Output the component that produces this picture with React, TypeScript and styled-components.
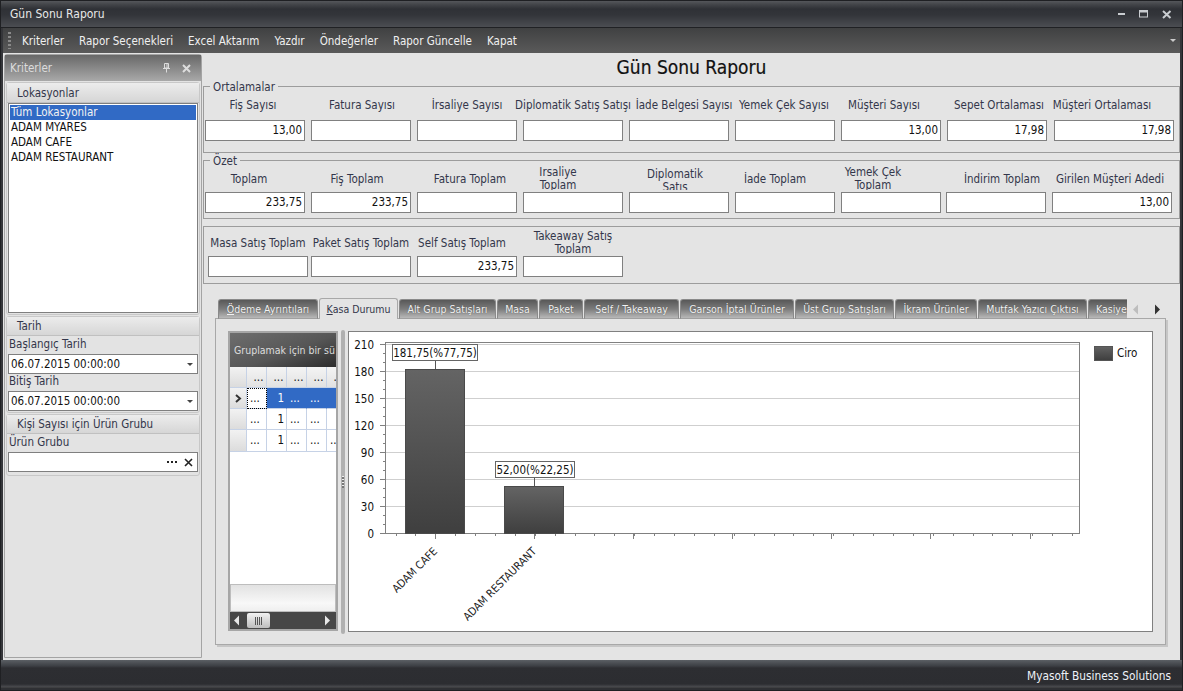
import React from "react";
import styled, { createGlobalStyle } from "styled-components";

const FONT = `"DejaVu Sans Condensed", "Liberation Sans", Arial, sans-serif`;

const Global = createGlobalStyle`
  html, body { margin: 0; padding: 0; background: #2f3034; }
  * { box-sizing: border-box; }
  body { font-family: ${FONT}; font-size: 11.5px; color: #33364a; }
`;

const Window = styled.div`
  width: 1183px; height: 691px; display: flex; flex-direction: column; overflow: hidden;
  background: #35363a; border: 1px solid #1f2023;
`;
const TitleBar = styled.div`
  height: 27px; flex: none; display: flex; align-items: center; justify-content: space-between;
  padding: 0 9px 0 9px; color: #e8e8e8; font-size: 12px;
  background: linear-gradient(#55575b 0, #45474b 3px, #2f3136 8px, #33353a 14px, #4b4d52 26px);
  border-bottom: 1px solid #202124;
`;
const WinButtons = styled.div`display: flex; align-items: center; gap: 13px; padding-right: 1px;`;
const MenuBar = styled.div`
  height: 25px; flex: none; display: flex; align-items: center; margin: 0 2px; padding: 0 5px;
  background: linear-gradient(#404142, #5a5a5a);
  color: #f0f0f0;
`;
const Grip = styled.div`width: 3px; height: 17px; margin-right: 11px;
  background: repeating-linear-gradient(#8a8a8a 0 2px, transparent 2px 4px);`;
const MenuItem = styled.span`margin-right: 15px; white-space: nowrap;`;
const MenuArrow = styled.span`margin-left: auto; margin-right: -1px; width: 0; height: 0;
  border-left: 3px solid transparent; border-right: 3px solid transparent; border-top: 3px solid #ccc;`;
const Body = styled.div`
  flex: 1; min-height: 0; display: flex; margin: 0 2px; background: #e4e4e4;
`;
const Side = styled.aside`
  width: 198px; flex: none; margin: 1px 0 2px 1px; border: 1px solid #a4a4a4; border-radius: 3px 3px 0 0;
  background: #e3e3e3; display: flex; flex-direction: column;
`;
const SideHead = styled.div`
  height: 26px; flex: none; display: flex; align-items: center; padding: 0 10px 0 5px; color: #dcdcdc;
  background: linear-gradient(#686868, #a9a9a9);
  justify-content: space-between;
`;
const SideIcons = styled.div`display: flex; align-items: center; gap: 11px;`;
const Section = styled.section`
  margin: 1px 1px 0 1px; border: 1px solid #c8c8c8; border-radius: 3px; display: flex; flex-direction: column;
  padding-bottom: ${p => p.$pb ?? 3}px;
`;
const SectionHead = styled.div`
  height: ${p => p.$h ?? 20}px; flex: none; padding-left: 10px; display: flex; align-items: center; color: #33364a;
  background: linear-gradient(#ececec, #d6d6d6); border-bottom: 1px solid #c0c0c0;
  margin-bottom: ${p => p.$mb ?? 0}px;
`;
const ListBox = styled.div`
  margin: 0 1px; height: 210px; background: #fff; border: 1px solid #7f7f7f; padding-top: 1px; color: #111;
`;
const ListRow = styled.div`
  height: 15px; line-height: 15px; padding-left: 1px;
  margin: 0 1px;
  background: ${p => (p.$selected ? "#316ac5" : "transparent")};
  color: ${p => (p.$selected ? "#f2f2f2" : "#111")};
`;
const SideLabel = styled.div`height: 16px; line-height: 15px; padding-left: 2px; color: #33364a;`;
const Combo = styled.div`
  margin: 1px 1px 0; height: 20px; background: #fff; border: 1px solid #7f7f7f; display: flex; align-items: center;
  padding: 0 4px 0 2px; color: #111; justify-content: space-between;
`;
const DownTri = styled.span`width: 0; height: 0; border-left: 3px solid transparent; border-right: 3px solid transparent; border-top: 3px solid #444;`;
const ComboTools = styled.span`display: flex; align-items: center; gap: 7px; font-weight: bold; color: #222;`;

const Main = styled.main`
  flex: 1; min-width: 0; padding-left: 1px; display: flex; flex-direction: column;
`;
const ReportTitle = styled.h1`
  margin: 0; height: 33px; flex: none; text-align: center; font-size: 19px; line-height: 28px; color: #111;
  font-weight: normal; -webkit-text-stroke: 0.2px #111;
`;
const Fieldset = styled.div`
  border: 1px solid #9c9c9c; height: ${p => p.$h}px; flex: none; margin-top: ${p => p.$mt ?? 0}px;
  padding: ${p => p.$pt}px 0 0 ${p => p.$pl}px; position: relative;
  display: grid; grid-template-columns: ${p => p.$cols}; grid-template-rows: 26px 21px; row-gap: ${p => p.$rg ?? 0}px;
  justify-content: start;
`;
const Legend = styled.span`
  position: absolute; left: 6px; top: -6px; background: #e4e4e4; padding: 0 3px; line-height: 13px; color: #33364a;
`;
const Label = styled.div`
  width: ${p => p.$w}px;
  display: flex; align-items: center; justify-content: center; white-space: pre; text-align: center;
  line-height: 13px; color: #33364a; clip-path: inset(0 -60px 2px -60px);
  padding-left: ${p => Math.max(0, p.$dx ?? 0) * 2}px; padding-right: ${p => Math.max(0, -(p.$dx ?? 0)) * 2}px;
  padding-top: ${p => p.$pt ?? 0}px;
`;
const Input = styled.div`
  width: ${p => p.$w}px;
  background: #fff; border: 1px solid #808080; text-align: right; padding-right: 2px; line-height: 19px; color: #111;
  grid-row: 2;
`;

const Tabs = styled.div`display: flex; flex-direction: column; margin: 14px 0 0 12px; width: 951px;`;
const TabStrip = styled.div`height: 21px; flex: none; display: flex; align-items: flex-end; padding-left: 3px; position: relative; z-index: 1;`;
const TabClip = styled.div`display: flex; width: 909px; overflow: hidden; align-items: flex-end; gap: 1px;`;
const Tab = styled.div`
  flex: none; width: ${p => p.$w}px; height: ${p => (p.$active ? 21 : 20)}px; display: flex; align-items: center; justify-content: ${p => (p.$clipped ? "flex-start" : "center")};
  padding-left: ${p => (p.$clipped ? 7 : 0)}px; font-size: 10.5px;
  border: 1px solid ${p => (p.$active ? "#a8a8a8" : "#8a8a8a")}; border-bottom: ${p => (p.$active ? "none" : "1px solid #a0a0a0")};
  border-radius: 3px 3px 0 0; white-space: pre; overflow: hidden;
  background: ${p => (p.$active ? "#e4e4e4" : "linear-gradient(#585858, #7c7c7c 50%, #b8b8b8)")};
  color: ${p => (p.$active ? "#33364a" : "#f2f2f2")};
  text-shadow: ${p => (p.$active ? "none" : "0 0 1px #444")};
  u { text-decoration: underline; }
`;
const TabNav = styled.div`display: flex; align-items: center; gap: 15px; margin-left: 5px; height: 20px;`;
const TabPage = styled.div`
  height: 327px; flex: none; margin-top: -1px; border: 1px solid #a8a8a8; box-shadow: 2px 2px 0 #c6c6c6;
  background: #e4e4e4; display: flex; padding: 12px 12px 13px 12px;
`;
const GridBox = styled.div`
  width: 110px; height: 300px; flex: none; border: 2px solid #a6a6a6; background: #fff; display: flex; flex-direction: column;
  overflow: hidden;
`;
const GroupPanel = styled.div`
  height: 34px; flex: none; padding-left: 4px; display: flex; align-items: center; color: #dcdcdc; white-space: nowrap; overflow: hidden; font-size: 10.5px;
  background: linear-gradient(160deg, #6e6e6e 0%, #565656 55%, #2c2c2c 100%);
`;
const GridRow = styled.div`
  display: grid; grid-template-columns: 17px 20px 20px 20px 20px 20px; flex: none; height: ${p => p.$h}px;
  overflow: hidden;
`;
const RowHead = styled.div`
  background: linear-gradient(#f2f2f2, #dcdcdc); border-right: 1px solid #c6d2e6; border-bottom: 1px solid #c6d2e6;
  display: flex; align-items: center; justify-content: center;
`;
const Cell = styled.div`
  border-right: 1px solid ${p => (p.$on ? "#316ac5" : "#c6d2e6")}; border-bottom: 1px solid #c6d2e6;
  background: ${p => (p.$on ? "#316ac5" : "#fff")};
  color: ${p => (p.$on ? "#fff" : "#111")};
  text-align: ${p => (p.$right ? "right" : "left")}; padding: 0 2px 0 3px; line-height: 21px; overflow: hidden; white-space: nowrap;
  outline: ${p => (p.$focus ? "1px dotted #000" : "none")}; outline-offset: -1px;
`;
const HeadCell = styled(Cell)`
  background: linear-gradient(#f4f4f4, #e2e2e2); text-align: center; padding: 0 0 0 4px;
`;
const GridBlank = styled.div`flex: 1; background: #fff;`;
const GridFooter = styled.div`
  height: 28px; flex: none; background: linear-gradient(#e2e2e2, #f8f8f8 70%, #efefef); border: 1px solid #bdbdbd;
`;
const HScroll = styled.div`
  height: 17px; flex: none; background: #474747; display: flex; align-items: center; justify-content: space-between; padding: 0 5px 0 3px; position: relative;
`;
const Thumb = styled.div`
  position: absolute; left: 17px; top: 1px; width: 23px; height: 15px; border-radius: 2px;
  background: linear-gradient(#f2f2f2, #bdbdbd); display: flex; align-items: center; justify-content: center;
`;
const Splitter = styled.div`
  width: 4px; height: 304px; margin: -1px 3px 0 3px; flex: none; background: #b0b0b0; border-radius: 2px; display: flex; align-items: center; justify-content: center;
`;
const SplitDots = styled.div`
  width: 2px; height: 12px; background: repeating-linear-gradient(#eee 0 1px, #777 1px 3px);
`;
const ChartBox = styled.div`
  width: 805px; height: 301px; flex: none; border: 1px solid #808080; background: #fff;
  svg { display: block; }
  text { font-family: ${FONT}; font-size: 11.5px; fill: #111; }
  text.axis { font-size: 11px; fill: #222; }
`;
const StatusBar = styled.div`
  height: 28px; flex: none; margin: 0; display: flex; justify-content: flex-end; align-items: center; padding: 3px 11px 0 0; color: #eef2f8; font-size: 11.8px;
  background: linear-gradient(#5b5f64 0, #3c3f44 6px, #2d2e32 8px, #2c2d31 24px, #4b4c50 27px, #333 28px);
`;
const Shim = styled.div`height: 2px; flex: none; background: #2f3034;`;

type F = [string, number, string, number?];
const ort: F[] = [
  ["Fiş Sayısı", -2, "13,00"], ["Fatura Sayısı", 1, ""], ["İrsaliye Sayısı", 0, ""], ["Diplomatik Satış Satışı", 0, ""],
  ["İade Belgesi Sayısı", 5, ""], ["Yemek Çek Sayısı", -1, ""], ["Müşteri Sayısı", -7, "13,00"], ["Sepet Ortalaması", 2, "17,98"], ["Müşteri Ortalaması", -12, "17,98"],
];
const oz: F[] = [
  ["Toplam", -6, "233,75"], ["Fiş Toplam", -4, "233,75"], ["Fatura Toplam", 3, ""], ["Irsaliye\nToplam", -15, ""], ["Diplomatik\nSatış", -4, "", 4],
  ["İade Toplam", -10, ""], ["Yemek Çek\nToplam", -18, ""], ["İndirim Toplam", 6, ""], ["Girilen Müşteri Adedi", -2, "13,00"],
];
const sat: F[] = [["Masa Satış Toplam", 0, ""], ["Paket Satış Toplam", 0, ""], ["Self Satış Toplam", -5, "233,75"], ["Takeaway Satış\nToplam", 0, ""]];

const tabs: [React.ReactNode, number][] = [
  [<><u>Ö</u>deme Ayrıntıları</>, 100], [<><u>K</u>asa Durumu</>, 79], ["Alt Grup Satışları", 97], ["Masa", 41], ["Paket", 44],
  ["Self / Takeaway", 95], ["Garson İptal Ürünler", 114], ["Üst Grup Satışları", 99], ["İkram Ürünler", 82], ["Mutfak Yazıcı Çıktısı", 109], ["Kasiyer", 60],
];

const Tri = ({ dir, color }: { dir: "l" | "r"; color: string }) => (
  <svg width="7" height="11" viewBox="0 0 7 11"><path d={dir === "l" ? "M6 0.5V10.5L1 5.5Z" : "M1 0.5V10.5L6 5.5Z"} fill={color} /></svg>
);

const FieldRow = ({ fields }: { fields: F[] }) => (
  <>
    {fields.map(([t, dx, , pt], i) => <Label key={t} $dx={dx} $pt={pt} $w={i === 8 ? 120 : 100}>{t}</Label>)}
    {fields.map(([t, , v], i) => <Input key={t} $w={i === 8 ? 120 : 100}>{v}</Input>)}
  </>
);

const yTicks = [0, 30, 60, 90, 120, 150, 180, 210];
const majorX = [435, 534, 633, 732, 831, 930, 1030];

const Chart = () => {
  const y = (v: number) => 533 - (v / 30) * 27;
  const minors: number[] = [];
  for (let v = 10; v < 210; v += 10) if (v % 30) minors.push(y(v));
  const xMinor: number[] = [];
  for (let x = 395.5; x < 1080; x += 19.9) xMinor.push(Math.round(x));
  return (
    <svg width="803" height="299" viewBox="349 332 803 299" shapeRendering="crispEdges">
      <defs>
        <linearGradient id="bar" x1="0" y1="0" x2="0" y2="1">
          <stop offset="0" stopColor="#646464" /><stop offset="1" stopColor="#3f3f3f" />
        </linearGradient>
      </defs>
      <rect x="385.5" y="342.5" width="694" height="190.5" fill="#fff" stroke="#808080" />
      {yTicks.slice(1).map(v => <line key={v} x1="386" x2="1079" y1={y(v) + 0.5} y2={y(v) + 0.5} stroke="#cfcfcf" />)}
      <line x1="385.5" x2="385.5" y1="342" y2="533" stroke="#808080" />
      <line x1="380" x2="1080" y1="533.5" y2="533.5" stroke="#808080" />
      {yTicks.map(v => (
        <g key={v}>
          <line x1="380" x2="386" y1={y(v) + 0.5} y2={y(v) + 0.5} stroke="#808080" />
          <text x="374" y={y(v) + 4.5} textAnchor="end">{v}</text>
        </g>
      ))}
      {minors.map(m => <line key={m} x1="383" x2="386" y1={Math.round(m) + 0.5} y2={Math.round(m) + 0.5} stroke="#808080" />)}
      {xMinor.map(x => <line key={x} x1={x + 0.5} x2={x + 0.5} y1="533" y2="536" stroke="#808080" />)}
      {majorX.map(x => <line key={x} x1={x + 0.5} x2={x + 0.5} y1="533" y2="539" stroke="#808080" />)}
      <rect x="405.5" y="369.5" width="59" height="163.5" fill="url(#bar)" stroke="#4a4a4a" />
      <rect x="504.5" y="486.5" width="59" height="46.5" fill="url(#bar)" stroke="#4a4a4a" />
      <line x1="435.5" x2="435.5" y1="360" y2="369" stroke="#555" />
      <line x1="534.5" x2="534.5" y1="477" y2="486" stroke="#555" />
      <rect x="392.5" y="344.5" width="85" height="16" fill="#fff" stroke="#666" />
      <rect x="495.5" y="461.5" width="79" height="16" fill="#fff" stroke="#666" />
      <text x="435" y="356.5" textAnchor="middle">181,75(%77,75)</text>
      <text x="535" y="473.5" textAnchor="middle">52,00(%22,25)</text>
      <text className="axis" transform="translate(438,552) rotate(-45)" textAnchor="end">ADAM CAFE</text>
      <text className="axis" transform="translate(537,552) rotate(-45)" textAnchor="end">ADAM RESTAURANT</text>
      <rect x="1094" y="346" width="18" height="14" fill="url(#bar)" stroke="#555" />
      <text x="1117" y="357">Ciro</text>
    </svg>
  );
};

export default function App() {
  return (
    <Window>
      <Global />
      <TitleBar>
        <span>Gün Sonu Raporu</span>
        <WinButtons>
          <svg width="8" height="4" viewBox="0 0 8 4"><rect y="1" width="7" height="2" fill="#c9ccd0" /></svg>
          <svg width="10" height="8" viewBox="0 0 10 8"><rect x="0.5" y="0.5" width="8" height="6.5" fill="none" stroke="#c9ccd0" /><rect y="0" width="9" height="2.5" fill="#c9ccd0" /></svg>
          <svg width="10" height="9" viewBox="0 0 10 9"><path d="M1 1L8.5 8M8.5 1L1 8" stroke="#c9ccd0" strokeWidth="2" /></svg>
        </WinButtons>
      </TitleBar>
      <MenuBar>
        <Grip />
        {["Kriterler", "Rapor Seçenekleri", "Excel Aktarım", "Yazdır", "Öndeğerler", "Rapor Güncelle", "Kapat"].map(m => <MenuItem key={m}>{m}</MenuItem>)}
        <MenuArrow />
      </MenuBar>
      <Body>
        <Side>
          <SideHead>
            <span>Kriterler</span>
            <SideIcons>
              <svg width="9" height="10" viewBox="0 0 9 10"><path d="M2.5 0.5H6.5V5H2.5ZM1 5.5H8M4.5 5.5V9.5M5 1V5" fill="none" stroke="#ddd" /></svg>
              <svg width="9" height="9" viewBox="0 0 9 9"><path d="M1 1L8 8M8 1L1 8" stroke="#ddd" strokeWidth="2" /></svg>
            </SideIcons>
          </SideHead>
          <Section $pb={1}>
            <SectionHead>Lokasyonlar</SectionHead>
            <ListBox>
              <ListRow $selected>Tüm Lokasyonlar</ListRow>
              <ListRow>ADAM MYARES</ListRow>
              <ListRow>ADAM CAFE</ListRow>
              <ListRow>ADAM RESTAURANT</ListRow>
            </ListBox>
          </Section>
          <Section $pb={1}>
            <SectionHead $h={19} $mb={1}>Tarih</SectionHead>
            <SideLabel>Başlangıç Tarih</SideLabel>
            <Combo>06.07.2015 00:00:00<DownTri /></Combo>
            <SideLabel>Bitiş Tarih</SideLabel>
            <Combo>06.07.2015 00:00:00<DownTri /></Combo>
          </Section>
          <Section $pb={3}>
            <SectionHead $h={19} $mb={1}>Kişi Sayısı için Ürün Grubu</SectionHead>
            <SideLabel>Ürün Grubu</SideLabel>
            <Combo>
              <span />
              <ComboTools>
                <svg width="10" height="2" viewBox="0 0 10 2"><path d="M0 0h2v2H0zM4 0h2v2H4zM8 0h2v2H8z" fill="#222" /></svg>
                <svg width="9" height="9" viewBox="0 0 9 9"><path d="M1 1L8 8M8 1L1 8" stroke="#222" strokeWidth="1.6" /></svg>
              </ComboTools>
            </Combo>
          </Section>
        </Side>
        <Main>
          <ReportTitle>Gün Sonu Raporu</ReportTitle>
          <Fieldset $h={67} $pt={5} $rg={2} $pl={1} $cols="repeat(7, 106px) 107px 120px">
            <Legend>Ortalamalar</Legend>
            <FieldRow fields={ort} />
          </Fieldset>
          <Fieldset $h={59} $mt={7} $pt={5} $pl={1} $cols="repeat(6, 106px) 105px 106px 120px">
            <Legend>Özet</Legend>
            <FieldRow fields={oz} />
          </Fieldset>
          <Fieldset $h={58} $mt={7} $pt={3} $pl={4} $cols="103px 106px 106px 100px">
            <FieldRow fields={sat} />
          </Fieldset>
          <Tabs>
            <TabStrip>
              <TabClip>
                {tabs.map(([t, w], i) => <Tab key={i} $w={w} $active={i === 1} $clipped={i === 10}>{t}</Tab>)}
              </TabClip>
              <TabNav>
                <Tri dir="l" color="#bdbdbd" />
                <Tri dir="r" color="#333" />
              </TabNav>
            </TabStrip>
            <TabPage>
              <GridBox>
                <GroupPanel>Gruplamak için bir sü</GroupPanel>
                <GridRow $h={21}>
                  <RowHead />
                  {[0, 1, 2, 3, 4].map(i => <HeadCell key={i}>...</HeadCell>)}
                </GridRow>
                <GridRow $h={21}>
                  <RowHead>
                    <svg width="7" height="9" viewBox="0 0 7 9"><path d="M1 1L5 4.5L1 8" fill="none" stroke="#333" strokeWidth="2" /></svg>
                  </RowHead>
                  <Cell $focus>...</Cell><Cell $on $right>1</Cell><Cell $on>...</Cell><Cell $on>...</Cell><Cell $on />
                </GridRow>
                <GridRow $h={21}>
                  <RowHead />
                  <Cell>...</Cell><Cell $right>1</Cell><Cell>...</Cell><Cell>...</Cell><Cell />
                </GridRow>
                <GridRow $h={22}>
                  <RowHead />
                  <Cell>...</Cell><Cell $right>1</Cell><Cell>...</Cell><Cell>...</Cell><Cell>...</Cell>
                </GridRow>
                <GridBlank />
                <GridFooter />
                <HScroll>
                  <Tri dir="l" color="#e8e8e8" />
                  <Thumb>
                    <svg width="7" height="8" viewBox="0 0 7 8"><path d="M0.5 0V8M2.5 0V8M4.5 0V8M6.5 0V8" stroke="#555" /></svg>
                  </Thumb>
                  <Tri dir="r" color="#e8e8e8" />
                </HScroll>
              </GridBox>
              <Splitter><SplitDots /></Splitter>
              <ChartBox><Chart /></ChartBox>
            </TabPage>
          </Tabs>
        </Main>
      </Body>
      <StatusBar>Myasoft Business Solutions</StatusBar>
      <Shim />
    </Window>
  );
}
